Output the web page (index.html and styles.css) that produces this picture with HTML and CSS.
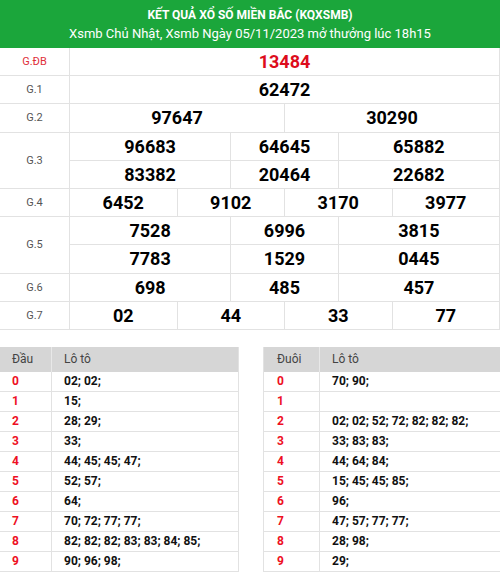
FILE: index.html
```html
<!DOCTYPE html>
<html lang="vi">
<head>
<meta charset="utf-8">
<title>KQXSMB</title>
<link rel="stylesheet" href="styles.css">
</head>
<body>
<div class="page">
  <div class="head">
    <div class="title">KẾT QUẢ XỔ SỐ MIỀN BẮC (KQXSMB)</div>
    <div class="sub">Xsmb Chủ Nhật, Xsmb Ngày 05/11/2023 mở thưởng lúc 18h15</div>
  </div>
  <div class="results">
    <div class="lbl red r1">G.ĐB</div>
    <div class="num db s8">13484</div>

    <div class="lbl r1">G.1</div>
    <div class="num s8">62472</div>

    <div class="lbl r1">G.2</div>
    <div class="num s4">97647</div>
    <div class="num s4">30290</div>

    <div class="lbl r2">G.3</div>
    <div class="num s3">96683</div>
    <div class="num s2">64645</div>
    <div class="num s3">65882</div>
    <div class="num s3">83382</div>
    <div class="num s2">20464</div>
    <div class="num s3">22682</div>

    <div class="lbl r1">G.4</div>
    <div class="num s2">6452</div>
    <div class="num s2">9102</div>
    <div class="num s2">3170</div>
    <div class="num s2">3977</div>

    <div class="lbl r2">G.5</div>
    <div class="num s3">7528</div>
    <div class="num s2">6996</div>
    <div class="num s3">3815</div>
    <div class="num s3">7783</div>
    <div class="num s2">1529</div>
    <div class="num s3">0445</div>

    <div class="lbl r1">G.6</div>
    <div class="num s3">698</div>
    <div class="num s2">485</div>
    <div class="num s3">457</div>

    <div class="lbl r1">G.7</div>
    <div class="num s2">02</div>
    <div class="num s2">44</div>
    <div class="num s2">33</div>
    <div class="num s2">77</div>
  </div>

  <div class="loto">
    <div class="lt left">
      <div class="lt-row lt-head"><div class="c1">Đầu</div><div class="c2">Lô tô</div></div>
      <div class="lt-row"><div class="c1 k">0</div><div class="c2 v">02; 02;</div></div>
      <div class="lt-row"><div class="c1 k">1</div><div class="c2 v">15;</div></div>
      <div class="lt-row"><div class="c1 k">2</div><div class="c2 v">28; 29;</div></div>
      <div class="lt-row"><div class="c1 k">3</div><div class="c2 v">33;</div></div>
      <div class="lt-row"><div class="c1 k">4</div><div class="c2 v">44; 45; 45; 47;</div></div>
      <div class="lt-row"><div class="c1 k">5</div><div class="c2 v">52; 57;</div></div>
      <div class="lt-row"><div class="c1 k">6</div><div class="c2 v">64;</div></div>
      <div class="lt-row"><div class="c1 k">7</div><div class="c2 v">70; 72; 77; 77;</div></div>
      <div class="lt-row"><div class="c1 k">8</div><div class="c2 v">82; 82; 82; 83; 83; 84; 85;</div></div>
      <div class="lt-row"><div class="c1 k">9</div><div class="c2 v">90; 96; 98;</div></div>
    </div>
    <div class="lt right">
      <div class="lt-row lt-head"><div class="c1">Đuôi</div><div class="c2">Lô tô</div></div>
      <div class="lt-row"><div class="c1 k">0</div><div class="c2 v">70; 90;</div></div>
      <div class="lt-row"><div class="c1 k">1</div><div class="c2 v"></div></div>
      <div class="lt-row"><div class="c1 k">2</div><div class="c2 v">02; 02; 52; 72; 82; 82; 82;</div></div>
      <div class="lt-row"><div class="c1 k">3</div><div class="c2 v">33; 83; 83;</div></div>
      <div class="lt-row"><div class="c1 k">4</div><div class="c2 v">44; 64; 84;</div></div>
      <div class="lt-row"><div class="c1 k">5</div><div class="c2 v">15; 45; 45; 85;</div></div>
      <div class="lt-row"><div class="c1 k">6</div><div class="c2 v">96;</div></div>
      <div class="lt-row"><div class="c1 k">7</div><div class="c2 v">47; 57; 77; 77;</div></div>
      <div class="lt-row"><div class="c1 k">8</div><div class="c2 v">28; 98;</div></div>
      <div class="lt-row"><div class="c1 k">9</div><div class="c2 v">29;</div></div>
    </div>
  </div>
</div>
</body>
</html>
```

FILE: styles.css
```css
* { box-sizing: border-box; }
html, body { margin: 0; padding: 0; background: #fff; }
body {
  font-family: Roboto, "Noto Sans", "Liberation Sans", sans-serif;
  color: #000;
  overflow: hidden;
}
.page { width: 500px; height: 574px; overflow: hidden; }

.head {
  background: #1ba63b;
  color: #fff;
  height: 48px;
  display: flex;
  flex-direction: column;
  align-items: center;
  padding-top: 7px;
}
.title { font-size: 12px; font-weight: 700; line-height: 16px; }
.sub { font-size: 13px; line-height: 18px; margin-top: 2px; }

.results {
  display: grid;
  grid-template-columns: 70px repeat(8, 1fr);
  grid-auto-rows: 28.2px;
  grid-auto-flow: row dense;
}
.results > div {
  border-right: 1px solid #e2e2e2;
  border-bottom: 1px solid #e2e2e2;
  display: flex;
  align-items: center;
  justify-content: center;
}
.lbl { grid-column: 1; font-size: 11px; color: #555; }
.lbl.red { color: #e0303a; }
.r1 { grid-row: span 1; }
.r2 { grid-row: span 2; }
.num { font-size: 18px; font-weight: 700; color: #000; }
.num.db { color: #dd0c1c; font-size: 18px; }
.s8 { grid-column: span 8; }
.s4 { grid-column: span 4; }
.s3 { grid-column: span 3; }
.s2 { grid-column: span 2; }

.loto {
  display: flex;
  gap: 24px;
  margin-top: 17px;
}
.lt { width: 239px; flex: none; border-right: 1px solid #e2e2e2; }
.lt.right { border-left: 1px solid #e2e2e2; border-right: none; }
.lt-row {
  display: flex;
  height: 20px;
  border-bottom: 1px solid #e2e2e2;
  align-items: center;
  font-size: 12px;
}
.lt-head {
  height: 25px;
  background: #d6d6d6;
  color: #444;
  border-bottom: none;
}
.lt-row > div { height: 100%; display: flex; align-items: center; }
.left .c1 { width: 52px; padding-left: 12px; border-right: 1px solid #e2e2e2; }
.right .c1 { width: 56px; padding-left: 13px; border-right: 1px solid #e2e2e2; }
.lt-head .c1 { border-right: 1px solid #e8e8e8; }
.c2 { padding-left: 12px; flex: 1; }
.k { color: #ee0f23; font-weight: 700; }
.v { font-weight: 700; color: #111; }
```
